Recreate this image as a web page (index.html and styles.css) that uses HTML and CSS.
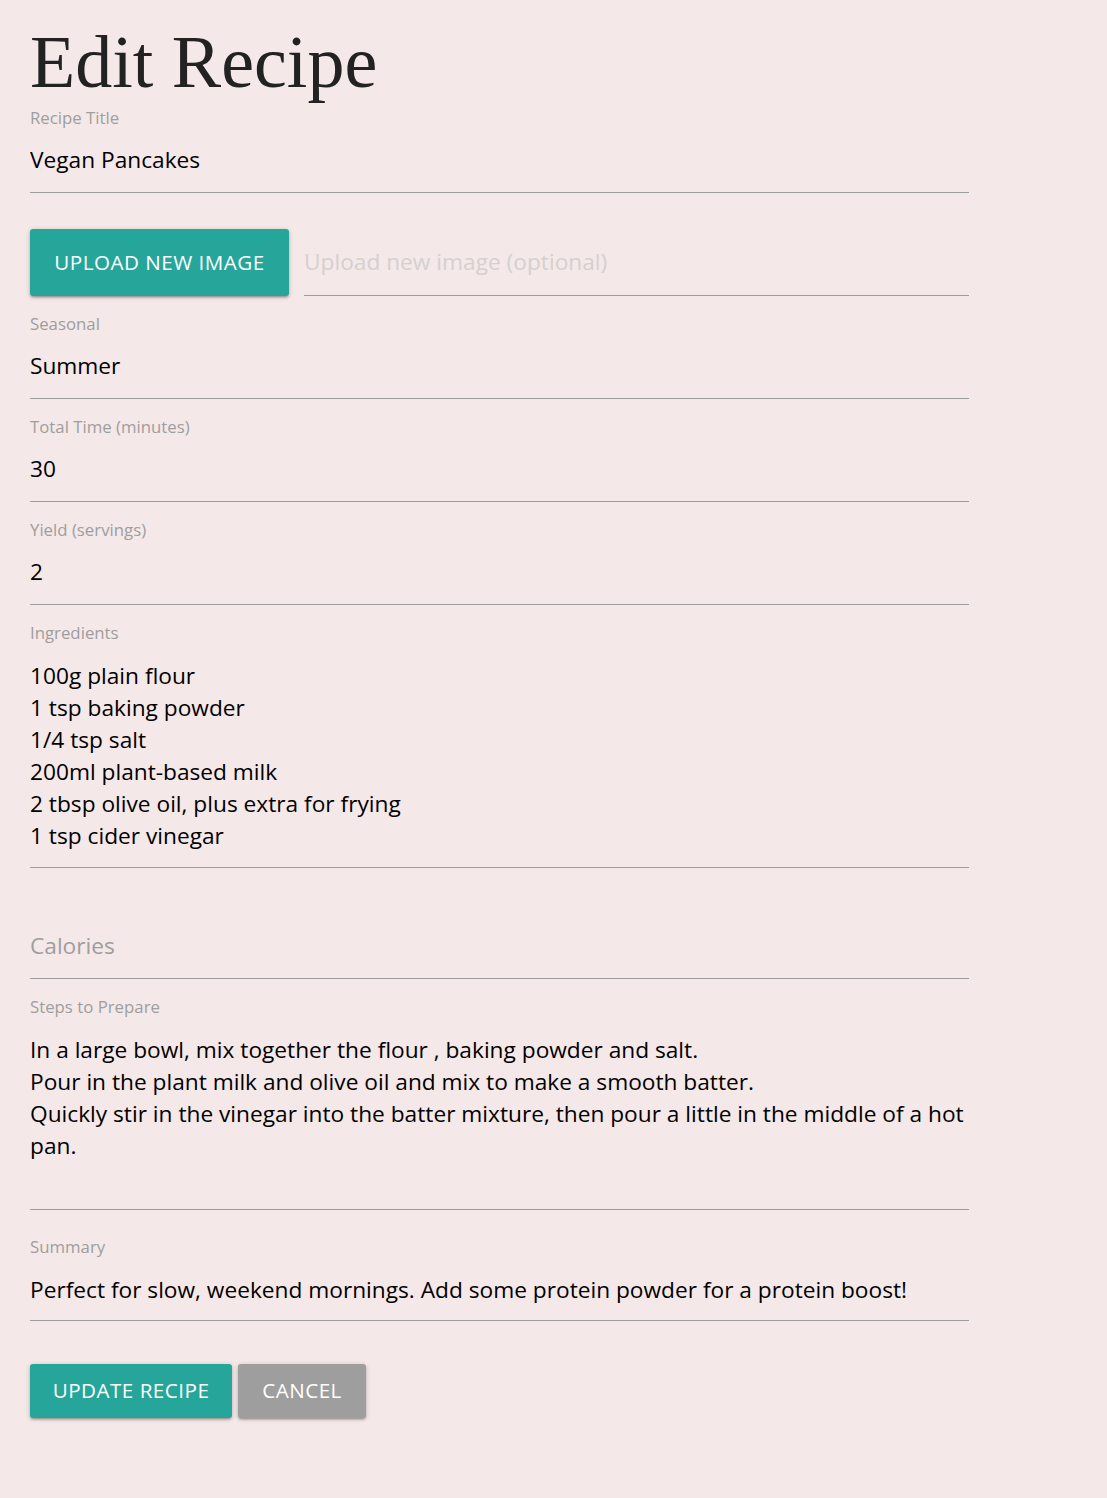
FILE: index.html
```html
<!DOCTYPE html>
<html lang="en">
<head>
<meta charset="utf-8">
<title>Edit Recipe</title>
<link rel="stylesheet" href="styles.css">
</head>
<body>
<main class="page">
  <h1 class="page-title">Edit Recipe</h1>
  <form class="recipe-form">
    <div class="field field-first">
      <label class="field-label" for="title">Recipe Title</label>
      <input class="field-input" id="title" type="text" value="Vegan Pancakes">
    </div>

    <div class="upload-row">
      <button type="button" class="btn btn-teal btn-upload">Upload new image</button>
      <input class="file-path" type="text" placeholder="Upload new image (optional)">
    </div>

    <div class="field">
      <label class="field-label" for="season">Seasonal</label>
      <input class="field-input" id="season" type="text" value="Summer">
    </div>

    <div class="field">
      <label class="field-label" for="time">Total Time (minutes)</label>
      <input class="field-input" id="time" type="text" value="30">
    </div>

    <div class="field">
      <label class="field-label" for="yield">Yield (servings)</label>
      <input class="field-input" id="yield" type="text" value="2">
    </div>

    <div class="field">
      <label class="field-label" for="ingredients">Ingredients</label>
      <textarea class="field-area area-ingredients" id="ingredients">100g plain flour
1 tsp baking powder
1/4 tsp salt
200ml plant-based milk
2 tbsp olive oil, plus extra for frying
1 tsp cider vinegar</textarea>
    </div>

    <div class="field field-nolabel">
      <input class="field-input" id="calories" type="text" placeholder="Calories">
    </div>

    <div class="field">
      <label class="field-label" for="steps">Steps to Prepare</label>
      <textarea class="field-area area-steps" id="steps">In a large bowl, mix together the flour , baking powder and salt.
Pour in the plant milk and olive oil and mix to make a smooth batter.
Quickly stir in the vinegar into the batter mixture, then pour a little in the middle of a hot pan.</textarea>
    </div>

    <div class="field field-summary">
      <label class="field-label" for="summary">Summary</label>
      <textarea class="field-area area-summary" id="summary">Perfect for slow, weekend mornings. Add some protein powder for a protein boost!</textarea>
    </div>

    <div class="actions">
      <button type="submit" class="btn btn-teal btn-update">Update Recipe</button>
      <button type="button" class="btn btn-grey btn-cancel">Cancel</button>
    </div>
  </form>
</main>
</body>
</html>
```

FILE: styles.css
```css
* {
  box-sizing: border-box;
}

html,
body {
  margin: 0;
  padding: 0;
  background: #f5e8e8;
}

body {
  font-family: "Open Sans", "Noto Sans", sans-serif;
  font-size: 22.7px;
  color: #000;
}

.page {
  width: 939px;
  margin-left: 30px;
  padding-top: 22px;
  padding-bottom: 80px;
}

.page-title {
  margin: 0;
  font-family: "Liberation Serif", serif;
  font-weight: 400;
  font-size: 74px;
  line-height: 81px;
  color: #222;
}

.recipe-form {
  display: flex;
  flex-direction: column;
}

.field {
  display: flex;
  flex-direction: column;
  padding-top: 17px;
}

.field-first {
  padding-top: 4px;
}

.field-nolabel {
  padding-top: 47px;
}

.field-summary {
  padding-top: 26px;
}

.field-label {
  font-size: 16.8px;
  line-height: 22px;
  color: #9e9e9e;
}

.field-input,
.field-area,
.file-path {
  display: block;
  width: 100%;
  margin: 0;
  padding: 0;
  border: 0;
  border-bottom: 1px solid #9e9e9e;
  border-radius: 0;
  background: transparent;
  font: inherit;
  color: #000;
  outline: none;
}

.field-input {
  height: 64px;
  line-height: 32px;
  padding-bottom: 2px;
}

.field-input::placeholder {
  color: #9e9e9e;
  opacity: 1;
}

.field-area {
  line-height: 32px;
  resize: none;
  overflow: hidden;
  padding-top: 16px;
}

.area-ingredients {
  height: 224px;
  padding-bottom: 16px;
}

.area-steps {
  height: 192px;
  padding-bottom: 48px;
}

.area-summary {
  height: 63px;
  padding-bottom: 15px;
}

.upload-row {
  display: flex;
  align-items: flex-end;
  gap: 15px;
  padding-top: 36px;
}

.file-path {
  flex: 1;
  height: 67px;
  line-height: 32px;
  padding-bottom: 2px;
}

.file-path::placeholder {
  color: #d4d0d0;
  opacity: 1;
}

.btn {
  display: inline-flex;
  align-items: center;
  justify-content: center;
  flex: none;
  border: 0;
  border-radius: 3px;
  padding: 0 0 2px;
  font-family: "Open Sans", "Noto Sans", sans-serif;
  font-size: 20.6px;
  letter-spacing: 0.5px;
  white-space: nowrap;
  text-transform: uppercase;
  color: #fff;
  cursor: pointer;
  box-shadow: 0 2px 2px 0 rgba(0, 0, 0, 0.14), 0 3px 1px -2px rgba(0, 0, 0, 0.12), 0 1px 5px 0 rgba(0, 0, 0, 0.2);
}

.btn-teal {
  background: #26a69a;
}

.btn-grey {
  background: #9e9e9e;
}

.btn-upload {
  width: 259px;
  height: 67px;
}

.actions {
  display: flex;
  gap: 6px;
  padding-top: 43px;
}

.actions .btn {
  height: 54px;
}

.btn-update {
  width: 202px;
}

.btn-cancel {
  width: 128px;
}
```
